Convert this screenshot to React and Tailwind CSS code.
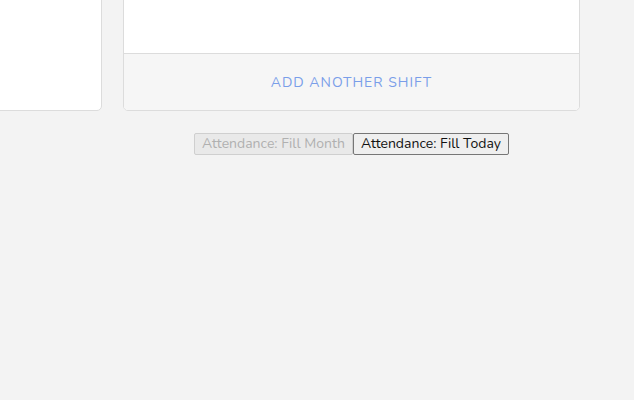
import React from 'react';

const App = () => {
    return (
        <div className="min-h-[400px] w-[634px] bg-[#f3f3f3] font-['Nunito','Lato','Noto_Sans',sans-serif] overflow-hidden">
            <div className="flex gap-[21px] -mt-[20px] -ml-[30px]">
                <div className="w-[132px] h-[131px] bg-white border border-[#dcdcdc] rounded-[5px]" />
                <div className="w-[457px] h-[131px] bg-white border border-[#dcdcdc] rounded-[5px] flex flex-col overflow-hidden">
                    <div className="h-[73px] border-b border-[#dcdcdc]" />
                    <div className="flex-1 bg-[#f6f6f6] flex items-center justify-center">
                        <span className="text-[14px] tracking-[1px] text-[#7a9ee9]">ADD ANOTHER SHIFT</span>
                    </div>
                </div>
            </div>
            <div className="flex justify-center pl-[69px] mt-[22px]">
                <button disabled className="h-[22px] px-[7px] text-[14px] leading-none bg-[#e9e9e9] border border-[#cfcfcf] text-[#b0b0b0] rounded-[2px]">Attendance: Fill Month</button>
                <button className="h-[22px] px-[7px] text-[14px] leading-none bg-[#efefef] border border-[#767676] text-[#111] rounded-[2px]">Attendance: Fill Today</button>
            </div>
        </div>
    );
};

export default App;
